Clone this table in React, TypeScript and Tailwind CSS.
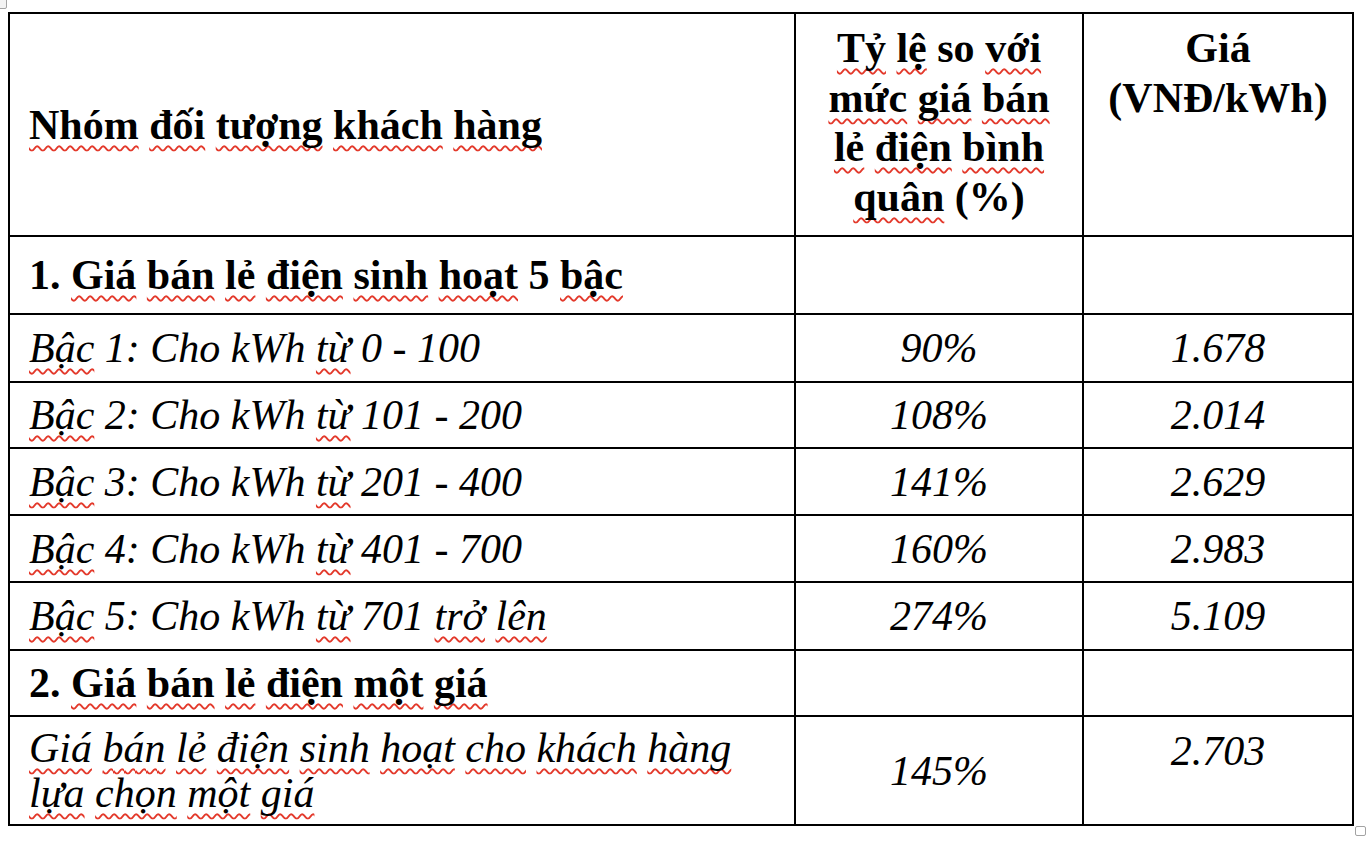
/**
 * Biểu giá bán lẻ điện — bảng giá điện sinh hoạt, rendered like a Word table
 * with spell-check squiggles under the Vietnamese words.
 */

import { Fragment } from "react";

/* -------------------------------------------------------------------------- */
/*  Helpers                                                                   */
/* -------------------------------------------------------------------------- */

// Words prefixed with "~" get the red spell-check squiggle.
function Words({ text }: { text: string }) {
  const words = text.split(" ");
  return (
    <>
      {words.map((w, i) => (
        <Fragment key={i}>
          {i > 0 && " "}
          {w.startsWith("~") ? (
            <span className="underline decoration-wavy decoration-[#e3392b] decoration-[1.5px] underline-offset-[6px] [text-decoration-skip-ink:none]">
              {w.slice(1)}
            </span>
          ) : (
            w
          )}
        </Fragment>
      ))}
    </>
  );
}

function Lines({ lines }: { lines: string[] }) {
  return (
    <>
      {lines.map((l, i) => (
        <Fragment key={i}>
          {i > 0 && <br />}
          <Words text={l} />
        </Fragment>
      ))}
    </>
  );
}

/* -------------------------------------------------------------------------- */
/*  Data                                                                      */
/* -------------------------------------------------------------------------- */

const tiers = [
  { label: "~Bậc 1: Cho kWh ~từ 0 - 100", pct: "90%", price: "1.678", h: "h-[68px]" },
  { label: "~Bậc 2: Cho kWh ~từ 101 - 200", pct: "108%", price: "2.014", h: "h-[66px]" },
  { label: "~Bậc 3: Cho kWh ~từ 201 - 400", pct: "141%", price: "2.629", h: "h-[67px]" },
  { label: "~Bậc 4: Cho kWh ~từ 401 - 700", pct: "160%", price: "2.983", h: "h-[67px]" },
  { label: "~Bậc 5: Cho kWh ~từ 701 ~trở ~lên", pct: "274%", price: "5.109", h: "h-[68px]" },
];

const cell = "border-r-2 border-b-2 border-black p-0 align-middle";
const first = `${cell} pl-[19px] pr-2 text-left`;
const mid = `${cell} text-center`;

/* -------------------------------------------------------------------------- */
/*  Component                                                                 */
/* -------------------------------------------------------------------------- */

export default function App() {
  return (
    <div className="relative h-[842px] w-[1368px] overflow-hidden bg-white font-['Liberation_Serif','Times_New_Roman',serif] text-[42px] leading-[48px] text-black">
      {/* Word table move handle */}
      <div className="absolute -left-[3px] -top-[2px] h-[11px] w-[10px] rounded-[2px] border border-[#a3a3a3] bg-[#f3f3f3]" />

      <table className="ml-[8px] mt-[12px] w-[1346px] table-fixed border-separate border-spacing-0 border-l-2 border-t-2 border-black">
        <colgroup>
          <col className="w-[786px]" />
          <col className="w-[288px]" />
          <col className="w-[270px]" />
        </colgroup>
        <tbody>
          {/* Header */}
          <tr className="h-[223px] font-bold">
            <td className={first}>
              <Words text="~Nhóm ~đối ~tượng ~khách ~hàng" />
            </td>
            <td className={`${mid} !align-top pt-[10px] leading-[49.5px]`}>
              <Lines lines={["~Tỷ ~lệ so ~với", "~mức ~giá ~bán", "~lẻ ~điện ~bình", "~quân (%)"]} />
            </td>
            <td className={`${mid} !align-top pt-[10px] leading-[49.5px]`}>
              <Lines lines={["Giá", "(VNĐ/kWh)"]} />
            </td>
          </tr>

          {/* 1. Five-tier residential */}
          <tr className="h-[78px] font-bold">
            <td className={first}>
              <Words text="1. ~Giá ~bán ~lẻ ~điện ~sinh ~hoạt 5 ~bậc" />
            </td>
            <td className={mid} />
            <td className={mid} />
          </tr>

          {tiers.map((t) => (
            <tr key={t.label} className={`${t.h} italic`}>
              <td className={first}>
                <Words text={t.label} />
              </td>
              <td className={mid}>{t.pct}</td>
              <td className={mid}>{t.price}</td>
            </tr>
          ))}

          {/* 2. Single price */}
          <tr className="h-[66px] font-bold">
            <td className={first}>
              <Words text="2. ~Giá ~bán ~lẻ ~điện ~một ~giá" />
            </td>
            <td className={mid} />
            <td className={mid} />
          </tr>

          <tr className="h-[109px] italic">
            <td className={`${first} leading-[45px]`}>
              <Lines lines={["~Giá ~bán ~lẻ ~điện ~sinh ~hoạt ~cho ~khách ~hàng", "~lựa ~chọn ~một ~giá"]} />
            </td>
            <td className={mid}>145%</td>
            <td className={`${mid} !align-top pt-[10px]`}>2.703</td>
          </tr>
        </tbody>
      </table>

      {/* Word table resize handle */}
      <div className="absolute left-[1355px] top-[826px] h-[10px] w-[11px] rounded-[2px] border border-[#a3a3a3] bg-white" />
    </div>
  );
}
